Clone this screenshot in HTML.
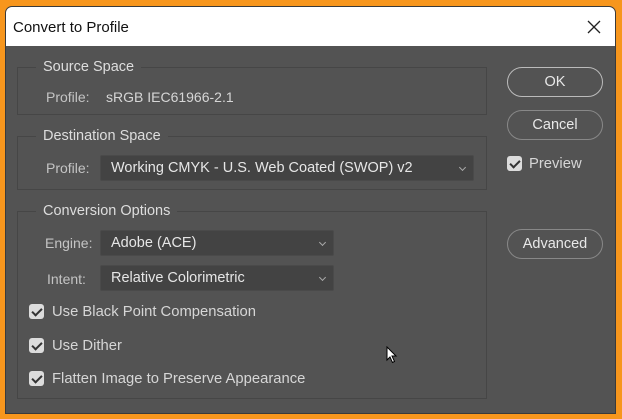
<!DOCTYPE html><html><head><style>
*{margin:0;padding:0;box-sizing:border-box}
body{width:622px;height:419px;background:#f7961d;font-family:"Liberation Sans",sans-serif;position:relative;overflow:hidden}
.dlg{position:absolute;left:5px;top:6px;width:611px;height:408px;background:#535353;border-radius:7px 7px 0 0;overflow:hidden;border:1px solid #3a3a3a}
.title{position:absolute;left:0;top:0;width:100%;height:39px;background:#fff;color:#111;font-size:15px;line-height:41px;padding-left:7px}
.x{position:absolute;right:14px;top:13px}
.box{position:absolute;border:1px solid #464646;border-top-color:#464646}
.lg{position:absolute;background:#535353;color:#ddd;font-size:14.5px;padding:0 7px;top:-10px;left:18px;line-height:18px}
.t{position:absolute;color:#d6d6d6;font-size:14px;line-height:18px;white-space:nowrap}
.lab{color:#c4c4c4}
.sel{position:absolute;background:#434343;border:1px solid #4a4a4a;border-radius:2px;color:#e6e6e6;font-size:14.5px;line-height:24px;padding-left:10px}
.sel:after{content:"";position:absolute;right:8px;top:9px;width:4px;height:4px;border-right:1px solid #aaa;border-bottom:1px solid #aaa;transform:rotate(45deg)}
.cb{position:absolute;width:15px;height:15px;background:#dcdcdc;border-radius:3px}
.cb:after{content:"";position:absolute;left:5px;top:2px;width:4px;height:8px;border-right:2px solid #333;border-bottom:2px solid #333;transform:rotate(45deg)}
.btn{position:absolute;left:501px;width:96px;height:30px;border:1px solid #888;border-radius:15px;color:#e8e8e8;font-size:14.5px;text-align:center;line-height:29px}
.cl{font-size:14.8px}
</style></head><body>
<div class="dlg">
<div class="title">Convert to Profile<svg class="x" width="14" height="14" viewBox="0 0 14 14"><path d="M1 1L13 13M13 1L1 13" stroke="#222" stroke-width="1.3"/></svg></div>
<div class="box" style="left:11px;top:60px;width:470px;height:48px"><div class="lg">Source Space</div></div>
<div class="t lab" style="left:40px;top:81px">Profile:</div>
<div class="t" style="left:100px;top:81px">sRGB IEC61966-2.1</div>
<div class="box" style="left:11px;top:129px;width:470px;height:54px"><div class="lg">Destination Space</div></div>
<div class="t lab" style="left:40px;top:152px">Profile:</div>
<div class="sel" style="left:94px;top:148px;width:374px;height:26px">Working CMYK - U.S. Web Coated (SWOP) v2</div>
<div class="box" style="left:11px;top:204px;width:470px;height:188px"><div class="lg">Conversion Options</div></div>
<div class="t lab" style="left:39px;top:227px">Engine:</div>
<div class="sel" style="left:94px;top:223px;width:234px;height:26px">Adobe (ACE)</div>
<div class="t lab" style="left:41px;top:263px">Intent:</div>
<div class="sel" style="left:94px;top:258px;width:234px;height:26px">Relative Colorimetric</div>
<div class="cb" style="left:23px;top:297px"></div><div class="t cl" style="left:46px;top:296px">Use Black Point Compensation</div>
<div class="cb" style="left:23px;top:331px"></div><div class="t cl" style="left:46px;top:330px">Use Dither</div>
<div class="cb" style="left:23px;top:364px"></div><div class="t cl" style="left:46px;top:363px">Flatten Image to Preserve Appearance</div>
<div class="btn" style="top:60px;border-color:#bbb">OK</div>
<div class="btn" style="top:103px">Cancel</div>
<div class="cb" style="left:501px;top:149px"></div><div class="t cl" style="left:523px;top:148px">Preview</div>
<div class="btn" style="top:222px">Advanced</div>
<svg style="position:absolute;left:380px;top:339px" width="12" height="18" viewBox="0 0 12 18"><path d="M1 1L1 14L4 11L6.5 16.5L8.5 15.5L6 10L10 10Z" fill="#fff" stroke="#000" stroke-width="1"/></svg>
</div>
</body></html>
